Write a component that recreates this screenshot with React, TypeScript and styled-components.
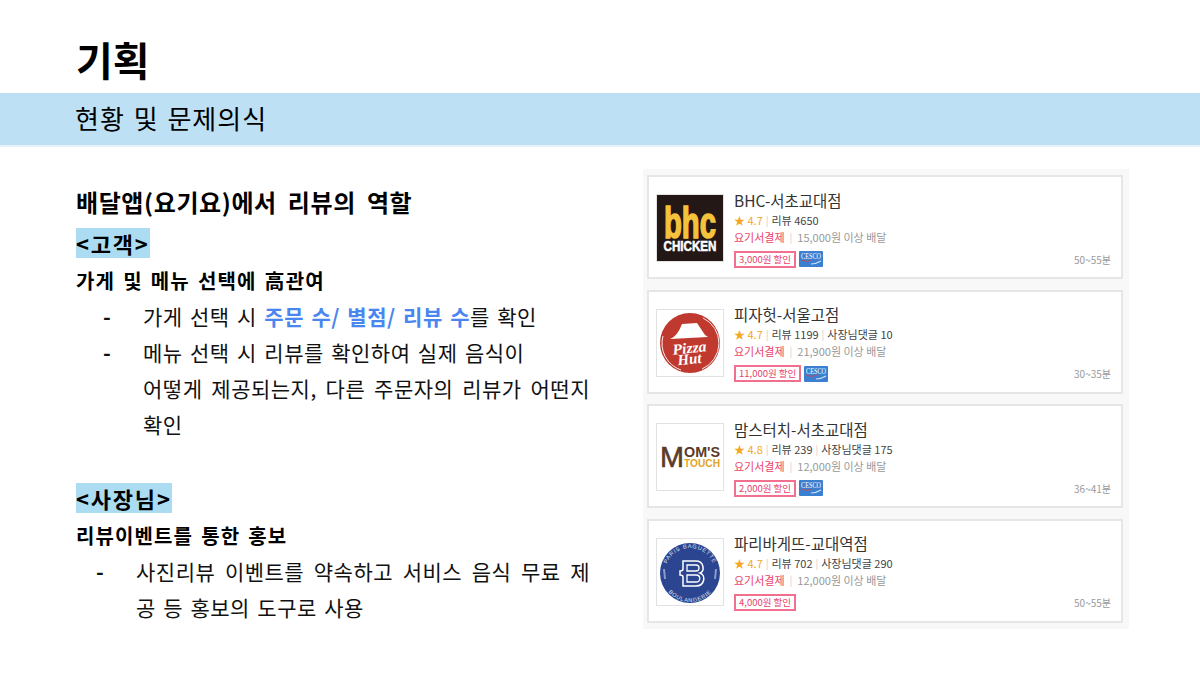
import React from "react";
import styled, { createGlobalStyle } from "styled-components";

interface Store {
  name: string;
  logo: React.ReactNode;
  rating: string;
  reviews: number;
  replies?: number;
  minOrder: string;
  discount: string;
  time: string;
  cesco: boolean;
}

const KR = `"Noto Sans CJK KR", "Liberation Sans", sans-serif`;

const GlobalStyle = createGlobalStyle`
  html, body {
    margin: 0;
    padding: 0;
    background: #fff;
  }
  body {
    width: 1200px;
    height: 675px;
    overflow: hidden;
    font-family: ${KR};
  }
`;

const BhcLogo = () => (
  <svg width="66" height="66" viewBox="0 0 66 66">
    <rect width="66" height="66" fill="#231815" />
    <text x="33" y="43" textAnchor="middle" fontFamily="Liberation Sans" fontWeight="700" fontSize="44" fill="#f5c33b" stroke="#f5c33b" strokeWidth="1.6" textLength="52" lengthAdjust="spacingAndGlyphs">
      bhc
    </text>
    <text x="33" y="56" textAnchor="middle" fontFamily="Liberation Sans" fontWeight="700" fontSize="14" fill="#fff" stroke="#fff" strokeWidth="0.5" textLength="53" lengthAdjust="spacingAndGlyphs">
      CHICKEN
    </text>
  </svg>
);

const PizzaLogo = () => (
  <svg width="66" height="66" viewBox="0 0 66 66">
    <circle cx="33" cy="33" r="30" fill="#c0392f" />
    <path d="M46 8 A28 28 0 0 1 45 59" fill="none" stroke="#fff" strokeWidth="0.9" />
    <path d="M6 26 A28 28 0 0 0 24 60" fill="none" stroke="#fff" strokeWidth="0.9" />
    <path d="M13 29 Q20 27 25 14 L40 13 L46 22 Q48 26 51 27 Z" fill="#fff" />
    <text x="33" y="43" textAnchor="middle" fontFamily="Liberation Serif" fontStyle="italic" fontWeight="700" fontSize="15" fill="#fff" textLength="34" lengthAdjust="spacingAndGlyphs" transform="rotate(-6 33 43)">
      Pizza
    </text>
    <text x="33" y="54" textAnchor="middle" fontFamily="Liberation Serif" fontStyle="italic" fontWeight="700" fontSize="15" fill="#fff" textLength="24" lengthAdjust="spacingAndGlyphs" transform="rotate(-6 33 54)">
      Hut
    </text>
  </svg>
);

const MomsLogo = () => (
  <svg width="66" height="66" viewBox="0 0 66 66">
    <text x="3" y="43" fontFamily="Liberation Sans" fontSize="30" fill="#5b3a29" stroke="#5b3a29" strokeWidth="0.6" textLength="24" lengthAdjust="spacingAndGlyphs">
      M
    </text>
    <text x="27" y="33" fontFamily="Liberation Sans" fontWeight="700" fontSize="14" fill="#5b3a29" textLength="36" lengthAdjust="spacingAndGlyphs">
      OM'S
    </text>
    <text x="27" y="43" fontFamily="Liberation Sans" fontWeight="700" fontSize="11" fill="#e2a32a" textLength="36" lengthAdjust="spacingAndGlyphs">
      TOUCH
    </text>
  </svg>
);

const ParisLogo = () => (
  <svg width="66" height="66" viewBox="0 0 66 66">
    <defs>
      <path id="pbTop" d="M8 34 A25 25 0 0 1 58 34" />
      <path id="pbBottom" d="M4 34 A29 29 0 0 0 62 34" />
    </defs>
    <circle cx="33" cy="34" r="30" fill="#2b4590" />
    <text fontFamily="Liberation Sans" fontSize="5.6" fill="#dfe5f3" letterSpacing="0.8">
      <textPath href="#pbTop" startOffset="50%" textAnchor="middle">
        PARIS BAGUETTE
      </textPath>
    </text>
    <text fontFamily="Liberation Sans" fontSize="5.6" fill="#dfe5f3" letterSpacing="0.8">
      <textPath href="#pbBottom" startOffset="50%" textAnchor="middle">
        BOULANGERIE
      </textPath>
    </text>
    <path d="M7 30 L8 40 M59 30 L58 40" stroke="#8b9cc9" strokeWidth="2" />
    <path
      d="M26 22 H39 C47 22 48 32 43 34 C49 36 48 47 39 47 H26 V38 Q26 36 23 36 V32 Q26 32 26 30 Z"
      fill="none"
      stroke="#fff"
      strokeWidth="1.5"
    />
    <path
      d="M30 26 H39 C43 26 43 32 39 32 H30 Z M30 36 H39 C44 36 44 43 39 43 H30 Z"
      fill="none"
      stroke="#fff"
      strokeWidth="1.3"
    />
  </svg>
);

const CescoMark = () => (
  <svg width="24" height="16" viewBox="0 0 24 16">
    <rect width="24" height="16" rx="1" fill="#3b7fd0" />
    <text x="12" y="8" textAnchor="middle" fontFamily="Liberation Serif" fontSize="8.5" fill="#fff" textLength="20" lengthAdjust="spacingAndGlyphs">
      CESCO
    </text>
    <path d="M2 9 Q8 12 13 9" fill="none" stroke="#d8434b" strokeWidth="0.8" />
    <path d="M12 13 Q17 13 22 10" fill="none" stroke="#cfe2f7" strokeWidth="1.2" />
  </svg>
);

const stores: Store[] = [
  { name: "BHC-서초교대점", logo: <BhcLogo />, rating: "4.7", reviews: 4650, minOrder: "15,000원 이상 배달", discount: "3,000원 할인", time: "50~55분", cesco: true },
  { name: "피자헛-서울고점", logo: <PizzaLogo />, rating: "4.7", reviews: 1199, replies: 10, minOrder: "21,900원 이상 배달", discount: "11,000원 할인", time: "30~35분", cesco: true },
  { name: "맘스터치-서초교대점", logo: <MomsLogo />, rating: "4.8", reviews: 239, replies: 175, minOrder: "12,000원 이상 배달", discount: "2,000원 할인", time: "36~41분", cesco: true },
  { name: "파리바게뜨-교대역점", logo: <ParisLogo />, rating: "4.7", reviews: 702, replies: 290, minOrder: "12,000원 이상 배달", discount: "4,000원 할인", time: "50~55분", cesco: false },
];

const App = () => {
  return (
    <Page>
      <GlobalStyle />
      <Title>기획</Title>
      <Band>현황 및 문제의식</Band>
      <Content>
        <TextColumn>
          <Heading>배달앱(요기요)에서 리뷰의 역할</Heading>
          <TagRow>
            <Tag>&lt;고객&gt;</Tag>
          </TagRow>
          <SubHeading>가게 및 메뉴 선택에 高관여</SubHeading>
          <Bullet>
            <Dash>-</Dash>
            <span>
              가게 선택 시 <Accent>주문 수/ 별점/ 리뷰 수</Accent>를 확인
            </span>
          </Bullet>
          <Bullet>
            <Dash>-</Dash>
            <span>메뉴 선택 시 리뷰를 확인하여 실제 음식이</span>
          </Bullet>
          <Bullet>
            <Dash />
            <Justified>어떻게 제공되는지, 다른 주문자의 리뷰가 어떤지</Justified>
          </Bullet>
          <Bullet>
            <Dash />
            <span>확인</span>
          </Bullet>
          <Spacer />
          <TagRow>
            <Tag>&lt;사장님&gt;</Tag>
          </TagRow>
          <SubHeading>리뷰이벤트를 통한 홍보</SubHeading>
          <Bullet $narrow>
            <Dash>-</Dash>
            <Justified>사진리뷰 이벤트를 약속하고 서비스 음식 무료 제</Justified>
          </Bullet>
          <Bullet $narrow>
            <Dash />
            <span>공 등 홍보의 도구로 사용</span>
          </Bullet>
        </TextColumn>
        <StoreList>
          {stores.map((store) => (
            <Card key={store.name}>
              <LogoBox>{store.logo}</LogoBox>
              <Info>
                <StoreName>{store.name}</StoreName>
                <Meta>
                  <Star>★ {store.rating}</Star>
                  <Sep>|</Sep>
                  <span>리뷰 {store.reviews}</span>
                  {store.replies !== undefined && (
                    <>
                      <Sep>|</Sep>
                      <span>사장님댓글 {store.replies}</span>
                    </>
                  )}
                </Meta>
                <PayRow>
                  <Pay>요기서결제</Pay>
                  <PaySep>|</PaySep>
                  <span>{store.minOrder}</span>
                </PayRow>
                <BottomRow>
                  <Discount>{store.discount}</Discount>
                  {store.cesco && <CescoMark />}
                  <Time>{store.time}</Time>
                </BottomRow>
              </Info>
            </Card>
          ))}
        </StoreList>
      </Content>
    </Page>
  );
};

const Page = styled.div`
  width: 1200px;
  height: 675px;
  display: flex;
  flex-direction: column;
  color: #000;
`;

const Title = styled.h1`
  margin: 0;
  height: 93px;
  padding: 34px 0 0 76px;
  box-sizing: border-box;
  font-size: 40px;
  line-height: 50px;
  font-weight: 700;
`;

const Band = styled.div`
  height: 52px;
  padding-left: 75px;
  background: #bde0f5;
  border-bottom: 2px solid #e4f2fb;
  font-size: 26px;
  line-height: 50px;
  letter-spacing: 1px;
  word-spacing: 2px;
`;

const Content = styled.div`
  display: flex;
  padding: 22px 71px 0 76px;
  justify-content: space-between;
`;

const TextColumn = styled.div`
  width: 514px;
  padding-top: 15px;
`;

const Heading = styled.div`
  font-size: 24px;
  font-weight: 700;
  line-height: 36px;
  height: 41px;
  letter-spacing: 0.6px;
  word-spacing: 5px;
`;

const TagRow = styled.div`
  height: 36px;
  display: flex;
  align-items: center;
`;

const Tag = styled.span`
  background: #abdcf2;
  font-size: 22px;
  font-weight: 700;
  line-height: 30px;
  letter-spacing: 1.8px;
`;

const SubHeading = styled.div`
  font-size: 20px;
  font-weight: 700;
  line-height: 40px;
  height: 37px;
  letter-spacing: 1.1px;
  word-spacing: 2.5px;
`;

const Bullet = styled.div<{ $narrow?: boolean }>`
  display: grid;
  grid-template-columns: 40px 1fr;
  padding-left: ${(p) => (p.$narrow ? "20px" : "27px")};
  font-size: 21px;
  line-height: 36px;
  height: 36px;
  color: #111;
  letter-spacing: 0.5px;
  word-spacing: 2.2px;
  white-space: nowrap;
`;

const Dash = styled.span`
  font-weight: 700;
`;

const Justified = styled.span`
  display: block;
  white-space: normal;
  text-align: justify;
  text-align-last: justify;
`;

const Accent = styled.span`
  color: #4a86f0;
  font-weight: 700;
`;

const Spacer = styled.div`
  height: 38px;
`;

const StoreList = styled.div`
  width: 486px;
  height: 460px;
  box-sizing: border-box;
  padding: 6px 6px 6px 4px;
  background: #f8f8f8;
  display: flex;
  flex-direction: column;
  gap: 10.5px;
`;

const Card = styled.div`
  height: 104px;
  flex: none;
  box-sizing: border-box;
  background: #fff;
  border: 2px solid #e6e6e6;
  display: flex;
  align-items: center;
  padding: 0 10px 0 7px;
  gap: 10px;
`;

const LogoBox = styled.div`
  width: 66px;
  height: 66px;
  margin-top: 2px;
  border: 1px solid #e2e2e2;
  flex: none;
  display: flex;
  overflow: hidden;
`;

const Info = styled.div`
  flex: 1;
  display: flex;
  flex-direction: column;
  padding-top: 3px;
`;

const StoreName = styled.div`
  font-size: 15.5px;
  line-height: 20px;
  margin-bottom: 1px;
  color: #333;
`;

const Meta = styled.div`
  display: flex;
  align-items: center;
  gap: 3px;
  font-size: 11px;
  line-height: 18px;
  color: #444;
`;

const Star = styled.span`
  color: #f5a623;
`;

const Sep = styled.span`
  color: #ccc;
  font-size: 10px;
`;

const PayRow = styled.div`
  display: flex;
  align-items: center;
  font-size: 11px;
  line-height: 16px;
  color: #999;
`;

const Pay = styled.span`
  color: #e8436c;
`;

const PaySep = styled.span`
  color: #ccc;
  margin: 0 5px;
  font-size: 10px;
`;

const BottomRow = styled.div`
  display: flex;
  align-items: center;
  gap: 3px;
  margin-top: 6px;
  height: 17px;
`;

const Discount = styled.span`
  border: 2px solid #f2708f;
  padding: 0 3px;
  font-size: 9.5px;
  line-height: 13px;
  color: #e8436c;
`;

const Time = styled.span`
  margin-left: auto;
  font-size: 10px;
  color: #999;
`;

export default App;
